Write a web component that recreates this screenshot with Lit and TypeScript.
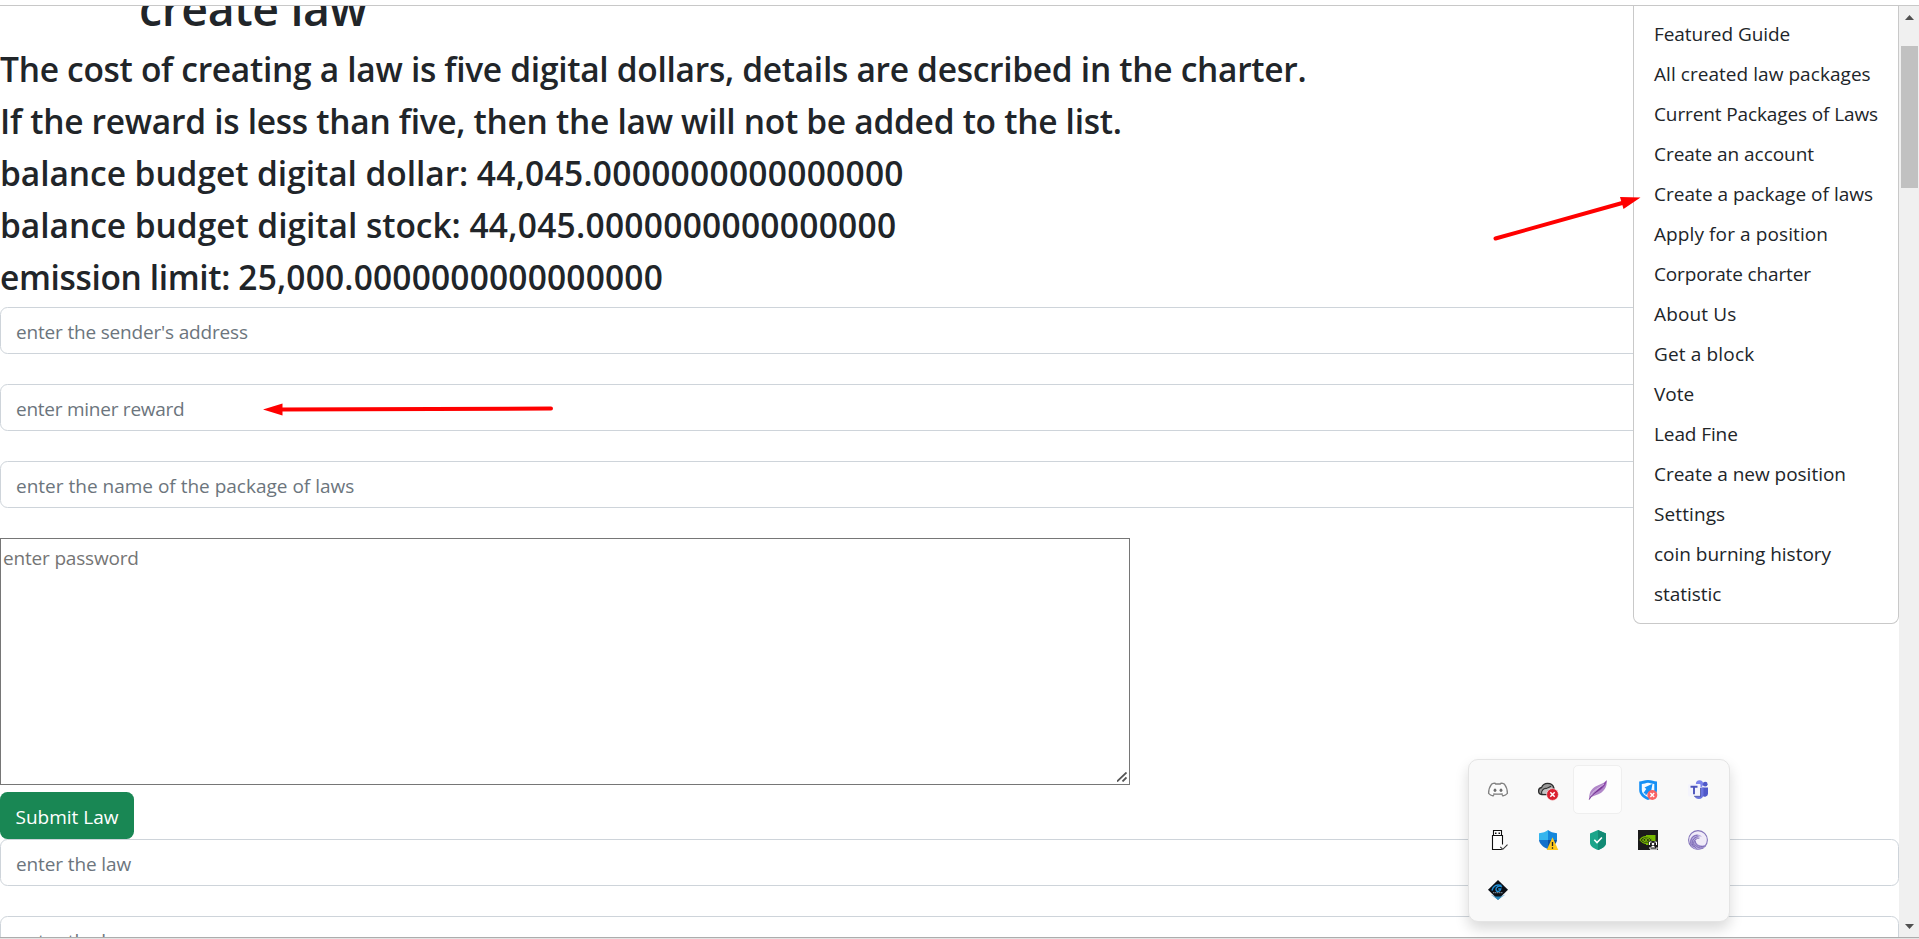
import { LitElement, html, css, svg } from "lit";
import { customElement } from "lit/decorators.js";
import { styleMap } from "lit/directives/style-map.js";

type Line = [text: string, tracking: number];

const HEADINGS: Line[][] = [
  [["The cost of creating a law is five digital dollars, details are described in the charter.", -0.29]],
  [["If the reward is less than five, then the law will not be added to the list.", -0.28]],
  [["balance budget digital dollar: ", -0.05], ["44,045.0000000000000000", 0.28]],
  [["balance budget digital stock: ", -0.03], ["44,045.0000000000000000", 0.28]],
  [["emission limit: ", -0.36], ["25,000.0000000000000000", 0.18]],
];

const MENU: Line[] = [
  ["Featured Guide", -0.06],
  ["All created law packages", 0.05],
  ["Current Packages of Laws", -0.12],
  ["Create an account", -0.04],
  ["Create a package of laws", 0.03],
  ["Apply for a position", 0.1],
  ["Corporate charter", -0.14],
  ["About Us", 0.15],
  ["Get a block", 0.15],
  ["Vote", 0],
  ["Lead Fine", -0.1],
  ["Create a new position", -0.02],
  ["Settings", 0.1],
  ["coin burning history", -0.01],
  ["statistic", -0.05],
];

const FIELDS: Line[] = [
  ["enter the sender's address", -0.18],
  ["enter miner reward", -0.25],
  ["enter the name of the package of laws", 0],
];

const LAWS: Line[] = [
  ["enter the law", -0.12],
  ["enter the law", -0.12],
];

const track = (n: number) => styleMap({ letterSpacing: `${n}px` });

const TRAY_ICONS = [
  // chat
  svg`<path d="M3.600 4.200C5 3.500 6 3.300 7 3.200l.7.800h4.600l.7-.800c1 .1 2 .3 3.400 1 2 2.600 3 5.800 3 9.200-1.200 1.300-2.800 2.100-4.400 2.500l-1.300-1.700H6.300L5 15.900C3.400 15.500 1.800 14.700.6 13.400c0-3.400 1-6.600 3-9.200z" fill="#fcfcfc" stroke="#808080" stroke-width="1.300"/><path d="M5.200 13.700c3 1.100 6.600 1.100 9.600 0" stroke="#999" fill="none"/><ellipse cx="7" cy="10.300" rx="1.400" ry="1.700" fill="#6e6e6e"/><ellipse cx="13" cy="10.300" rx="1.400" ry="1.700" fill="#6e6e6e"/>`,
  // cloud sync, error
  svg`<path d="M3.800 14.500C1.500 14.300.6 12.600.6 11c0-2 1.300-3.300 3-3.500C4.700 4.600 7 3.400 9.500 3.400c3 0 5.600 1.600 6.400 4.600v6.500z" fill="#999" stroke="#2b2b2b" stroke-width="1.300"/><path d="M3.800 14.200c-1-3 1.500-6 4.700-5.700L13 6.200" stroke="#333" stroke-width="1.200" fill="none"/><path d="M4.500 13.800c-.6-2.400 1-4.600 3.500-4.600l6-2v7z" fill="#c4c4c4"/><circle cx="14.500" cy="14.500" r="5.900" fill="#da2030" stroke="#f7f7f7" stroke-width=".6"/><path d="M12.300 12.300l4.400 4.400M16.700 12.300l-4.400 4.400" stroke="#fff" stroke-width="1.500"/>`,
  // feather
  svg`<path d="M1.200 19.600C1 15 2 10.500 6 7.600 10 4.700 15 4.400 18.700.3c.5 5.500-1.500 9.700-5.500 12.400C9.500 15 5.500 15.300 3 17.600z" fill="#b187c9"/><path d="M1.200 19.600C4 14 12 9 18.700.3 18 8 9 12 4.500 15.300z" fill="#8a47a8"/><path d="M2.500 16C5 10 11 8.500 16 4" stroke="#dcc7e8" fill="none" stroke-width=".8"/><path d="M1.200 19.700C3 15 9 11.500 14 7" stroke="#6d2e8c" stroke-width=".8" fill="none"/>`,
  // rocket shield, error
  svg`<path d="M1.200 1.600C4 1.600 6 0 10 0s6 1.600 9 1.600V10c0 4.500-4 8-9 10-5-2-8.800-5.500-8.800-10z" fill="#1690f5"/><path d="M3.800 4c2.400 0 4-1.300 6.200-1.300S14 4 16.300 4v6c0 3-2.500 5.400-6.300 7.300C6.200 15.400 3.800 13 3.800 10z" fill="#f5faff"/><path d="M14.500 3.800l-8 3.700 1.800 1.500-3 4.300 2 .2.400 2 3.500-3.700 1.600 1.500z" fill="#1690f5"/><circle cx="14.300" cy="15" r="5" fill="#f96464"/><path d="M12.400 13.100l3.800 3.800M16.200 13.100l-3.800 3.800" stroke="#fff" stroke-width="1.400"/>`,
  // teams
  svg`<circle cx="11.500" cy="3.800" r="3.600" fill="#7b83eb"/><circle cx="17.200" cy="4.200" r="2.400" fill="#5059c9"/><path d="M14.500 7.500H20v6.300a3.200 3.200 0 0 1-5.500 2z" fill="#5059c9"/><path d="M7 7.500h8.500v6.800c0 3-2 4.700-4.700 4.700-2.300 0-3.800-1.200-4.300-3z" fill="#6a73de"/><rect y="4" width="12.500" height="12.300" rx="1" fill="#f4f4fc"/><path d="M12.500 8v8.300H6" stroke="#3d4596" fill="none" stroke-width=".7"/><path d="M2.500 6.800h7M6 6.800v7.500" stroke="#4b53bc" stroke-width="1.900" fill="none"/>`,
  // usb drive
  svg`<path d="M5.500 5.500v-5h8v5M4.500 5.500h10v14h-10z" fill="#fff" stroke="#111" stroke-width="1.100"/><path d="M7 2.500h1.500v1.500H7zM10.500 2.500H12v1.500h-1.500z" fill="#111"/><path d="M12 14.500h8v4l-3 1.500h-3z" fill="#fafafa"/><path d="M12.300 16.800l2.500 2.500 4.700-4.700" stroke="#333" stroke-width="1.100" fill="none"/>`,
  // defender, warning
  svg`<path d="M1 3.200C5 3 7.500 1.800 10 0v10H1z" fill="#35b5ee"/><path d="M10 0c2.500 1.800 5 3 9 3.200V10h-9z" fill="#1487dc"/><path d="M1 10h9v9.200C5 17 1.500 14 1 10z" fill="#1270ca"/><path d="M10 10h9c-.5 4-4 7-9 9.200z" fill="#0c50a0"/><path d="M14.500 7.300L20.300 20H8.700z" fill="#fdc81c"/><path d="M14.500 12v4M14.500 17.300v1.500" stroke="#222" stroke-width="1.300"/>`,
  // green shield
  svg`<path d="M10 0l8 3.600V13c0 3-4 5.700-8 7-4-1.300-8-4-8-7V3.600z" fill="#1aa58a"/><path d="M10 0l8 3.600V13c0 3-4 5.700-8 7z" fill="#128a74"/><path d="M6.300 9.800l2.700 2.700 4.900-5" stroke="#fff" stroke-width="1.600" fill="none"/>`,
  // gpu settings
  svg`<rect width="20" height="20" fill="#1b1b1b"/><path d="M8 5h9.500v10H8z" fill="#76b900"/><path d="M2 10c2.500-4 8-5 12.500 0-4 5-9 4.500-12.500 0z" fill="#1b1b1b" stroke="#76b900" stroke-width="1.100"/><path d="M4.500 10c2-2.500 5-2.800 7.500 0-2.500 2.800-5 2.500-7.500 0z" fill="none" stroke="#76b900" stroke-width="1.100"/><circle cx="8.200" cy="10" r="1.200" fill="#76b900"/><path d="M10.500 11h9v9h-9z" fill="#1b1b1b"/><path d="M11.500 15v-3h2M16.500 12h2v3M12 19.200h7v-2M12 17v2" stroke="#fff" fill="none"/><circle cx="15" cy="14" r="1.300" fill="#fff"/><path d="M13 17.500c.5-2.300 3.500-2.300 4 0z" fill="#fff"/>`,
  // spiral
  svg`<circle cx="10" cy="10" r="9.400" fill="#f0ebf8" stroke="#8474ba" stroke-width="1.100"/><path d="M2.300 14C.8 8.500 4.500 4.200 9.500 4.500c2 .1 3.500 1 4.500 2.300-3.800-1.300-6.500.8-6.200 4 .3 3.800 5 6 11 3.700C17 18 13 19.600 10 19.400 6.500 19.200 3.500 17.500 2.300 14z" fill="#b5a8dc"/><path d="M3.300 15.500C1.500 10.500 4 5.200 9.500 5.200M5.500 17C2.500 12.500 5 6.800 10.500 6.900M8.500 18.700C3.500 14.500 5.500 8.500 11.500 8M18 15.700c-5 2-10.500.3-10.700-4.500M15.500 18c-4 .7-7-.8-8.500-3.500" stroke="#7663b0" stroke-width=".9" fill="none"/>`,
  // diamond
  svg`<path d="M2.500 14.500L10 20l7.500-5.500L13 16H7z" fill="#76b8dd"/><path d="M10 0l10 9.800L10 19.500 0 9.800z" fill="#0b0f16"/><path d="M4 10.500C5 5.500 9 4 13.500 5.500M14 7C11 5 7.500 7 8 9.800c.5 2.300 4 2.400 4.700-.8h-2.500" stroke="#1f8fd8" stroke-width="1.400" fill="none"/><path d="M5 12.700h10" stroke="#8795a0" stroke-width="1" stroke-dasharray="1.500 .5"/><path d="M6.500 16.500L10 20l3.500-3.500z" fill="#2785b8"/>`,
];

@customElement("tray-panel")
class TrayPanel extends LitElement {
  static styles = css`
    :host {
      display: grid;
      grid-template-columns: repeat(5, 50px);
      grid-auto-rows: 50px;
      box-sizing: border-box;
      width: 262px;
      height: 163px;
      padding: 5px 6px 5px 4px;
      background: #f9f9f9;
      border: 1px solid #e4e4e4;
      border-radius: 10px;
      box-shadow: 0 7px 14px rgba(0, 0, 0, 0.15);
    }
    .cell {
      display: flex;
      align-items: center;
      justify-content: center;
      box-sizing: border-box;
      margin: 0 1px 1px 0;
      border: 1px solid transparent;
      border-radius: 5px;
    }
    .active {
      background: #fdfdfd;
      border-color: #efefef;
    }
    svg {
      width: 20px;
      height: 20px;
      overflow: visible;
    }
  `;
  render() {
    return TRAY_ICONS.map(
      (icon, i) => html`<div class="cell ${i === 2 ? "active" : ""}"><svg viewBox="0 0 20 20">${icon}</svg></div>`
    );
  }
}

@customElement("app-root")
class AppRoot extends LitElement {
  static styles = css`
    :host {
      display: flex;
      flex-direction: column;
      position: relative;
      box-sizing: border-box;
      width: 1919px;
      height: 939px;
      overflow: hidden;
      padding-top: 5px;
      background: #fff;
      color: #212529;
      font: 19px/30px "Open Sans", sans-serif;
    }
    .view {
      flex: 1;
      min-height: 0;
      display: flex;
      overflow: hidden;
      border-top: 1px solid #c8c8c8;
      border-bottom: 1px solid #adadad;
    }
    .foot {
      height: 1px;
      background: #e4e4e4;
    }
    .page {
      flex: 1;
      min-width: 0;
      overflow: hidden;
    }
    h1,
    h3 {
      margin: 0 0 10px;
      font-family: "Open Sans", sans-serif;
      font-weight: 600;
      white-space: pre;
    }
    h1 {
      margin-top: -28px;
      margin-bottom: 9px;
      padding-left: 139px;
      font-size: 46.5px;
      line-height: 60px;
      letter-spacing: -0.4px;
    }
    h3 {
      box-sizing: border-box;
      height: 42px;
      padding-top: 1px;
      font-size: 33.5px;
      line-height: 42px;
    }
    input {
      display: block;
      box-sizing: border-box;
      width: 100%;
      height: 47px;
      margin: 0 0 30px;
      padding: 9px 15px 7px;
      border: 1px solid #ced4da;
      border-radius: 7.5px;
      background: #fff;
      font: inherit;
    }
    input::placeholder {
      color: #6c757d;
      opacity: 1;
    }
    .area {
      position: relative;
      width: 1130px;
      margin: 0 0 7px;
    }
    .grip {
      position: absolute;
      right: 3px;
      bottom: 3px;
      width: 10px;
      height: 10px;
      stroke: #555;
      stroke-width: 1.8;
    }
    textarea {
      display: block;
      box-sizing: border-box;
      width: 100%;
      height: 247px;
      padding: 4px 2px;
      border: 1px solid #767676;
      border-radius: 0;
      font: inherit;
      letter-spacing: -0.18px;
      resize: none;
    }
    textarea::placeholder {
      color: #757575;
    }
    button {
      display: block;
      width: 134px;
      height: 47px;
      padding: 2px 0 0;
      border: 0;
      border-radius: 7.5px;
      background: #198754;
      color: #fff;
      font: inherit;
    }
    .bar {
      display: flex;
      flex-direction: column;
      align-items: center;
      box-sizing: border-box;
      width: 20px;
      padding: 9px 0 8px;
      background: #f0f0f0;
    }
    .bar svg {
      width: 9px;
      height: 5px;
      fill: #505050;
    }
    .thumb {
      width: 17px;
      height: 142px;
      margin: 26px 0 auto 1px;
      background: #c1c1c1;
    }
    .menu {
      position: absolute;
      top: 6px;
      right: 20px;
      box-sizing: border-box;
      width: 266px;
      padding: 8px 0 9px;
      border: 1px solid #c9c9c9;
      border-top: 0;
      border-radius: 0 0 7.5px 7.5px;
      background: #fff;
    }
    .item {
      padding: 5px 20px;
      white-space: nowrap;
    }
    .marks {
      position: absolute;
      inset: 0;
      width: 1919px;
      height: 939px;
      pointer-events: none;
      fill: #f00;
      stroke: #f00;
    }
    tray-panel {
      position: absolute;
      left: 1468px;
      top: 759px;
    }
  `;

  private field([text, n]: Line) {
    return html`<input placeholder=${text} style=${track(n)} />`;
  }

  render() {
    return html`
      <div class="view">
        <main class="page">
          <h1>create law</h1>
          ${HEADINGS.map((parts) => html`<h3>${parts.map(([t, n]) => html`<span style=${track(n)}>${t}</span>`)}</h3>`)}
          ${FIELDS.map((f) => this.field(f))}
          <div class="area">
            <textarea placeholder="enter password"></textarea>
            <svg class="grip" viewBox="0 0 10 10"><path d="M0 9.500L9.500.5M5.500 9.500L9.500 5.500" /></svg>
          </div>
          <button>Submit Law</button>
          ${LAWS.map((f) => this.field(f))}
        </main>
        <div class="bar">
          <svg viewBox="0 0 9 5"><path d="M4.500 0L9 5H0z" /></svg>
          <div class="thumb"></div>
          <svg viewBox="0 0 9 5"><path d="M4.500 5L9 0H0z" /></svg>
        </div>
      </div>
      <div class="foot"></div>
      <nav class="menu">${MENU.map(([t, n]) => html`<div class="item" style=${track(n)}>${t}</div>`)}</nav>
      <svg class="marks" viewBox="0 0 1919 939">
        <path d="M1495.500 238.500L1624 202.500M551 408.500L280 409.500" stroke-width="4" stroke-linecap="round" />
        <path d="M1640.500 197.500L1620 197L1623.500 209zM263 409.500L282.500 403.500V415.500z" stroke="none" />
      </svg>
      <tray-panel></tray-panel>
    `;
  }
}
